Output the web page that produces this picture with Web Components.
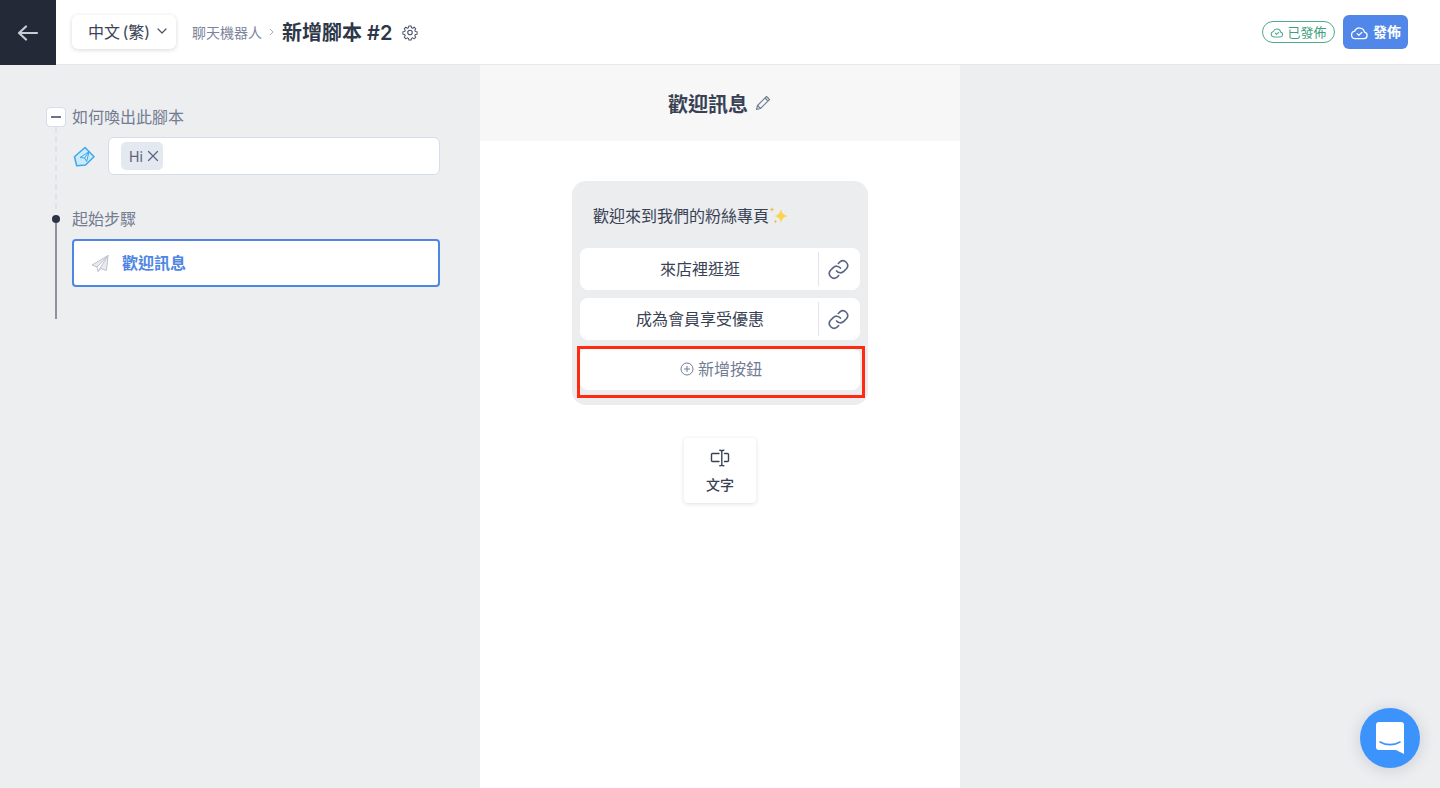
<!DOCTYPE html>
<html lang="zh-Hant">
<head>
<meta charset="utf-8">
<title>新增腳本</title>
<style>
  html, body { margin: 0; height: 100%; }
  body {
    overflow: hidden;
    font-family: Inter, "Noto Sans CJK TC", sans-serif;
    color: #2d3748;
    background: #edeef0;
  }
</style>
</head>
<body>
<app-page>
  <app-header slot="header"></app-header>
  <script-tree slot="left"></script-tree>
  <message-editor slot="center"></message-editor>
</app-page>
<chat-launcher></chat-launcher>

<script>
class AppPage extends HTMLElement {
  constructor() {
    super();
    this.attachShadow({ mode: "open" });
    this.shadowRoot.innerHTML = `
      <style>
        :host { display: grid; grid-template-rows: 65px 1fr; height: 788px; }
        .header { display: block; position: relative; z-index: 1; }
        .main { display: grid; grid-template-columns: 480px 480px 1fr; min-height: 0; }
      </style>
      <div class="header"><slot name="header"></slot></div>
      <div class="main">
        <slot name="left"></slot>
        <slot name="center"></slot>
      </div>
    `;
  }
}

class AppHeader extends HTMLElement {
  constructor() {
    super();
    this.attachShadow({ mode: "open" });
    this.shadowRoot.innerHTML = `
      <style>
        :host {
          display: flex; align-items: center; height: 65px; box-sizing: border-box;
          background: #fff; border-bottom: 1px solid #e6e7ea;
        }
        .back {
          width: 56px; height: 65px; margin-bottom: -1px; background: #232936; flex: none;
          display: flex; align-items: center; justify-content: center;
        }
        .lang {
          margin-left: 16px; width: 104px; height: 34px; box-sizing: border-box; padding: 0 9px 2px 16px;
          display: flex; align-items: center; justify-content: space-between;
          border-radius: 6px; background: #fff; font-size: 16px; color: #3c4557; word-spacing: -2px;
          box-shadow: 0 1px 4px rgba(30,40,60,.18);
        }
        .crumb { margin-left: 16px; font-size: 14px; color: #7a849c; margin-bottom: 1px; }
        .sep { margin: 0 8px 0 7px; display: flex; }
        .title { font-size: 20px; font-weight: 600; color: #2d3748; margin-bottom: 1px; }
        .gear { margin-left: 9px; display: flex; }
        .right { margin-left: auto; display: flex; align-items: center; gap: 8px; padding-right: 32px; }
        .badge {
          height: 22px; width: 73px; box-sizing: border-box; border: 1px solid #4fab8c; border-radius: 11px;
          display: flex; align-items: center; justify-content: center; gap: 3px;
          font-size: 13px; color: #3f9f80;
        }
        .publish {
          width: 65px; height: 34px; border-radius: 6px; background: #5087e8; color: #fff;
          display: flex; align-items: center; justify-content: center; gap: 4px;
          font-size: 14px; font-weight: 700;
        }
        .badge span, .publish span { margin-top: -2px; }
      </style>
      <div class="back">
        <svg width="22" height="16" viewBox="0 0 22 16" fill="none" stroke="#c8ccd5" stroke-width="2.2" stroke-linecap="round" stroke-linejoin="round"><path d="M20 8H2M9 1.500 2 8l7 6.500"/></svg>
      </div>
      <div class="lang">
        <span>中文 (繁)</span>
        <svg width="10" height="6" viewBox="0 0 10 6" fill="none" stroke="#4a5468" stroke-width="1.200" stroke-linecap="round" stroke-linejoin="round"><path d="M1 1l4 4 4-4"/></svg>
      </div>
      <span class="crumb">聊天機器人</span>
      <span class="sep"><svg width="5" height="8" viewBox="0 0 5 8" fill="none" stroke="#a9b0bf" stroke-width="1"><path d="M1 1l3 3-3 3"/></svg></span>
      <span class="title">新增腳本 #2</span>
      <span class="gear">
        <svg width="18" height="18" viewBox="0 0 24 24" fill="none" stroke="#4a5468" stroke-width="1.500" stroke-linejoin="round"><path d="M10.300 3h3.400l.5 2.600 1.800.8 2.200-1.500 2.400 2.400-1.500 2.200.8 1.800 2.600.5v3.400l-2.600.5-.8 1.800 1.500 2.200-2.400 2.400-2.200-1.500-1.800.8-.5 2.600h-3.400l-.5-2.600-1.800-.8-2.200 1.500-2.400-2.400 1.500-2.200-.8-1.800-2.600-.5v-3.400l2.600-.5.8-1.800-1.500-2.200 2.400-2.400 2.200 1.500 1.800-.8z" transform="translate(1.200 1.200) scale(.9)"/><circle cx="12" cy="12.600" r="3"/></svg>
      </span>
      <div class="right">
        <span class="badge">
          <svg width="14" height="12" viewBox="0 0 24 20" fill="none" stroke="#4fab8c" stroke-width="1.800" stroke-linecap="round" stroke-linejoin="round"><path d="M6.500 18.500a4.800 4.800 0 0 1-.6-9.500 6.500 6.500 0 0 1 12.400 1.200 4.200 4.200 0 0 1-.6 8.300z"/><path d="M9 12l2.200 2.200L15 10.500"/></svg>
          <span>已發佈</span>
        </span>
        <span class="publish">
          <svg width="19" height="16" viewBox="0 0 24 20" fill="none" stroke="#fff" stroke-width="1.600" stroke-linecap="round" stroke-linejoin="round"><path d="M6.500 18.500a4.800 4.800 0 0 1-.6-9.500 6.500 6.500 0 0 1 12.400 1.200 4.200 4.200 0 0 1-.6 8.300z"/><path d="M9 12l2.200 2.200L15 10.500"/></svg>
          <span>發佈</span>
        </span>
      </div>
    `;
  }
}

class ScriptTree extends HTMLElement {
  constructor() {
    super();
    this.attachShadow({ mode: "open" });
    this.shadowRoot.innerHTML = `
      <style>
        :host { display: block; padding: 42px 40px 0 46px; font-size: 16px; }
        .head { position: relative; z-index: 1; display: flex; align-items: center; height: 20px; gap: 6px; color: #737c90; }
        .head > span:last-child { margin-top: -3px; }
        .minus {
          width: 20px; height: 20px; box-sizing: border-box; border: 1px solid #d5dde8; border-radius: 4px; background: #fff;
          display: flex; align-items: center; justify-content: center;
        }
        .minus i { width: 10px; height: 2px; background: #6b7489; }
        .gutter { width: 20px; display: flex; justify-content: center; }
        .dot { width: 8px; height: 8px; border-radius: 50%; background: #2d3446; }
        .trigger {
          margin-left: 9px; height: 82px; box-sizing: border-box; padding: 10px 0 0 16px;
          border-left: 2px dashed #dfe2e7; display: flex; gap: 13px; align-items: flex-start;
        }
        .tag-icon { margin-top: 9px; flex: none; display: flex; }
        .input {
          flex: 1; height: 38px; box-sizing: border-box; border: 1px solid #d5dde8; border-radius: 6px;
          background: #fff; padding: 4px 12px; display: flex; align-items: flex-start;
        }
        .tag {
          height: 28px; padding: 0 4px 0 8px; border-radius: 5px; background: #e4e8f0; color: #5a647a;
          display: flex; align-items: center; gap: 4px; font-size: 14px;
        }
        .steps {
          margin: -6px 0 0 9px; height: 96px; box-sizing: border-box; padding: 16px 0 0 15px;
          border-left: 2px solid #8f929a;
        }
        .step {
          height: 48px; box-sizing: border-box; border: 2px solid #4f86e3; border-radius: 4px; background: #fff;
          display: flex; align-items: center; padding-left: 17px; gap: 13px;
          color: #4f86e3; font-weight: 700;
        }
        .step span { margin-top: -3px; }
      </style>
      <div class="head"><span class="minus"><i></i></span><span>如何喚出此腳本</span></div>
      <div class="trigger">
        <span class="tag-icon">
          <svg width="22" height="22" viewBox="0 0 22 22"><path d="M1.500 10.700 12 1.500l9 9.200-8.500 8.300-8.800.8z" fill="#cdeafc" stroke="#3ea9e8" stroke-width="1.500" stroke-linejoin="round"/><path d="M7 11.500 16 5.700 13.700 15.500 11.500 12zM11.500 12 16 5.700" fill="none" stroke="#3ea9e8" stroke-width="1" stroke-linejoin="round"/></svg>
        </span>
        <div class="input">
          <span class="tag">Hi
            <svg width="12" height="12" viewBox="0 0 12 12" fill="none" stroke="#5a647a" stroke-width="1.200" stroke-linecap="round"><path d="M1.500 1.500l9 9M10.500 1.500l-9 9"/></svg>
          </span>
        </div>
      </div>
      <div class="head"><span class="gutter"><span class="dot"></span></span><span>起始步驟</span></div>
      <div class="steps">
        <div class="step">
          <svg width="18" height="17" viewBox="0 0 18 17" fill="#e8eaef" stroke="#bcc2cd" stroke-width="1" stroke-linejoin="round"><path d="M17 .5 1 10l5 2 1 4.500 3-3 5.500 2zM6 12 17 .5 7 16.500"/></svg>
          <span>歡迎訊息</span>
        </div>
      </div>
    `;
  }
}

class MessageEditor extends HTMLElement {
  constructor() {
    super();
    this.attachShadow({ mode: "open" });
    this.shadowRoot.innerHTML = `
      <style>
        :host { display: block; background: #fff; height: 723px; }
        .top {
          height: 76px; background: #f7f7f7; display: flex; align-items: center; justify-content: center; gap: 7px;
          font-size: 20px; font-weight: 700; color: #394254;
        }
        .top svg { margin-right: 1px; }
        .body { display: flex; flex-direction: column; align-items: center; padding-top: 40px; }
        .bubble {
          position: relative; width: 296px; box-sizing: border-box; padding: 0 8px 15px;
          background: #ecedef; border-radius: 14px;
        }
        .greeting {
          height: 67px; box-sizing: border-box; padding: 24px 13px 0; display: flex; align-items: flex-start;
          font-size: 16px; line-height: 22px; color: #394254;
        }
        .greeting svg { flex: none; margin-top: 1px; }
        .stack { display: flex; flex-direction: column; gap: 8px; }
        .highlight {
          position: absolute; left: 5px; right: 3px; bottom: 7px; height: 52px; box-sizing: border-box;
          border: 3px solid #ff2a10;
        }
        .tile {
          margin-top: 33px; width: 72px; height: 65px; border-radius: 4px; background: #fff;
          box-shadow: 0 1px 4px rgba(30,40,60,.14);
          display: flex; flex-direction: column; align-items: center; justify-content: flex-start;
          padding-top: 10px; box-sizing: border-box; gap: 6px;
          font-size: 14px; font-weight: 500; color: #394254;
        }
      </style>
      <div class="top">
        <span>歡迎訊息</span>
        <svg width="16" height="16" viewBox="0 0 16 16" fill="none" stroke="#737c95" stroke-width="1.100" stroke-linejoin="round"><path d="M1.500 14.500l1-4L11.500 1.500l3 3-9 9zM10 3l3 3M2.500 10.500l3 3"/></svg>
      </div>
      <div class="body">
        <div class="bubble">
          <div class="greeting">
            <span>歡迎來到我們的粉絲專頁</span>
            <svg width="20" height="20" viewBox="0 0 20 20" fill="#fcd34d"><path d="M12 2.500c.8 5 2.400 6.700 7.500 7.500-5.100.8-6.700 2.400-7.500 7.500-.8-5.100-2.400-6.700-7.500-7.500 5.100-.8 6.700-2.500 7.500-7.500z"/><path d="M3 1c.3 1.700.8 2.200 2.500 2.500C3.800 3.800 3.300 4.300 3 6c-.3-1.700-.8-2.200-2.500-2.500C2.200 3.200 2.700 2.700 3 1z" fill="#f5b93f"/><path d="M6.500 13.500c.2 1.300.7 1.800 2 2-1.300.2-1.800.7-2 2-.2-1.300-.7-1.800-2-2 1.300-.2 1.800-.7 2-2z" fill="#f5b93f"/></svg>
          </div>
          <div class="stack">
            <reply-button>來店裡逛逛</reply-button>
            <reply-button>成為會員享受優惠</reply-button>
            <add-button>新增按鈕</add-button>
          </div>
          <div class="highlight"></div>
        </div>
        <div class="tile">
          <svg width="20" height="20" viewBox="0 0 20 20" fill="none" stroke="#394254" stroke-width="1.400" stroke-linecap="round" stroke-linejoin="round"><path d="M9 5.500H2.500a1 1 0 0 0-1 1v6a1 1 0 0 0 1 1H9M14.500 5.500h3a1 1 0 0 1 1 1v6a1 1 0 0 1-1 1h-3M11.800 3v14M9.800 2.200c1 0 1.600.3 2 .8.400-.5 1-.8 2-.8M9.800 17.800c1 0 1.600-.3 2-.8.400.5 1 .8 2 .8"/></svg>
          <span>文字</span>
        </div>
      </div>
    `;
  }
}

class ReplyButton extends HTMLElement {
  constructor() {
    super();
    this.attachShadow({ mode: "open" });
    this.shadowRoot.innerHTML = `
      <style>
        :host {
          display: flex; align-items: center; height: 42px; background: #fff; border-radius: 8px;
          font-size: 16px; color: #394254;
        }
        .label { flex: 1; text-align: center; margin-top: -2px; padding-left: 2px; }
        .link {
          width: 42px; height: 34px; box-sizing: border-box; border-left: 1px solid #e2e4e9; padding-right: 2px;
          display: flex; align-items: center; justify-content: center;
        }
      </style>
      <span class="label"><slot></slot></span>
      <span class="link">
        <svg width="23" height="23" viewBox="0 0 24 24" fill="none" stroke="#5a6583" stroke-width="1.700" stroke-linecap="round" stroke-linejoin="round"><path d="M10 13.500a5 5 0 0 0 7.500.5l3-3a5 5 0 0 0-7-7l-1.700 1.700"/><path d="M14 10.500a5 5 0 0 0-7.500-.5l-3 3a5 5 0 0 0 7 7l1.700-1.700"/></svg>
      </span>
    `;
  }
}

class AddButton extends HTMLElement {
  constructor() {
    super();
    this.attachShadow({ mode: "open" });
    this.shadowRoot.innerHTML = `
      <style>
        :host {
          display: flex; align-items: center; justify-content: center; gap: 4px; height: 42px; padding-left: 2px;
          background: #fff; border-radius: 8px; font-size: 16px; color: #737c95;
        }
        span { margin-top: -2px; }
      </style>
      <svg width="14" height="14" viewBox="0 0 14 14" fill="none" stroke="#737c95" stroke-width="1"><circle cx="7" cy="7" r="6"/><path d="M7 4v6M4 7h6"/></svg>
      <span><slot></slot></span>
    `;
  }
}

class ChatLauncher extends HTMLElement {
  constructor() {
    super();
    this.attachShadow({ mode: "open" });
    this.shadowRoot.innerHTML = `
      <style>
        :host {
          position: fixed; right: 20px; bottom: 20px; width: 60px; height: 60px; border-radius: 50%;
          background: #3b93fb; box-shadow: 0 2px 16px rgba(30,40,60,.16);
          display: flex; align-items: center; justify-content: center;
        }
      </style>
      <svg width="28" height="32" viewBox="0 0 28 32"><path d="M3 0h22a3 3 0 0 1 3 3v29l-8-4H3a3 3 0 0 1-3-3V3a3 3 0 0 1 3-3z" fill="#fff"/><path d="M4 20c6 3.500 14 3.500 20 0" fill="none" stroke="#3b93fb" stroke-width="1.600" stroke-linecap="round"/></svg>
    `;
  }
}

customElements.define("app-page", AppPage);
customElements.define("app-header", AppHeader);
customElements.define("script-tree", ScriptTree);
customElements.define("message-editor", MessageEditor);
customElements.define("reply-button", ReplyButton);
customElements.define("add-button", AddButton);
customElements.define("chat-launcher", ChatLauncher);
</script>
</body>
</html>
